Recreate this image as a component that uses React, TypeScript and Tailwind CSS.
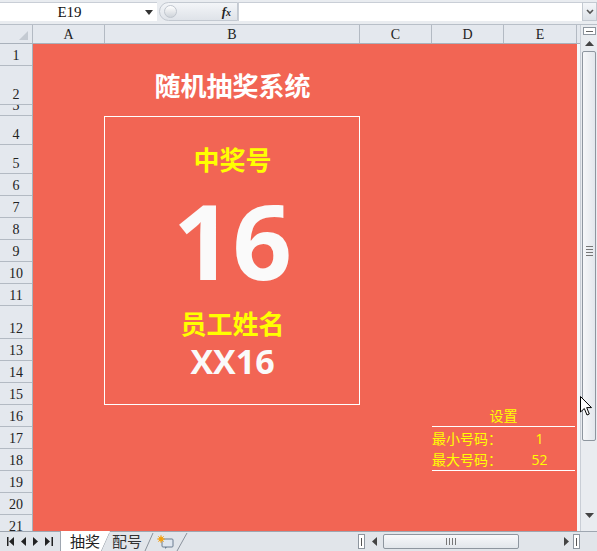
import React from "react";

const rowLabels = Array.from({ length: 21 }, (_, i) => String(i + 1));

const cjk = "font-['Open_Sans','Noto_Sans_CJK_SC',sans-serif]";
const mono = "font-['Liberation_Serif','Noto_Sans_CJK_SC',serif]";

function FormulaBar() {
  return (
    <div className="h-[25px] shrink-0 bg-[#e9ecf0] border-b border-[#b8bfc8] flex items-stretch pt-[2px] pb-[3px]">
      {/* Name box */}
      <div className="w-[157px] bg-white border-t border-[#c9ced6] flex items-center relative">
        <span className={`${mono} text-[15px] text-[#111] w-full text-center pr-[18px]`}>E19</span>
        <svg className="absolute right-[4px] top-[7px]" width="8" height="5" viewBox="0 0 8 5">
          <path d="M0 0 L8 0 L4 5 Z" fill="#333" />
        </svg>
      </div>
      {/* fx pill */}
      <div className="w-[79px] ml-[2px] rounded-l-full bg-gradient-to-b from-[#f3f5f8] to-[#dfe3e9] border border-[#c3c9d1] flex items-center justify-between px-[4px]">
        <span className="w-[13px] h-[13px] rounded-full bg-gradient-to-b from-white to-[#cfd4da] border border-[#c0c6ce]" />
        <span className="font-['Liberation_Serif',serif] italic font-bold text-[13px] text-[#222] pr-[2px]">
          f<span className="text-[10px]">x</span>
        </span>
      </div>
      {/* Input */}
      <div className="flex-1 bg-white border-t border-l border-[#c9ced6]" />
      {/* Expand button */}
      <div className="w-[15px] bg-gradient-to-b from-[#f4f6f9] to-[#dde2e8] border border-[#c3c9d1] flex items-center justify-center">
        <svg width="8" height="6" viewBox="0 0 8 6">
          <path d="M1 1 L4 4 L7 1" stroke="#555" strokeWidth="1.6" fill="none" />
        </svg>
      </div>
    </div>
  );
}

function ColumnHeaders() {
  const cols: [string, string][] = [
    ["A", "w-[72px]"],
    ["B", "w-[255px]"],
    ["C", "w-[72px]"],
    ["D", "w-[72px]"],
    ["E", "w-[73px]"],
  ];
  return (
    <div className="h-[19px] shrink-0 flex bg-[#e4e8ee] border-b border-[#a9b1bb]">
      <div className="w-[33px] border-r border-[#b3bac3] relative">
        <svg className="absolute right-[4px] bottom-[3px]" width="9" height="9" viewBox="0 0 9 9">
          <path d="M9 0 L9 9 L0 9 Z" fill="#c4cad2" />
        </svg>
      </div>
      {cols.map(([label, w]) => (
        <div
          key={label}
          className={`${w} border-r border-[#b3bac3] flex items-center justify-center ${mono} text-[14px] text-[#222]`}
        >
          {label}
        </div>
      ))}
      <div className="flex-1" />
    </div>
  );
}

function RowHeaders() {
  return (
    <div className="w-[33px] shrink-0 grid grid-rows-[22px_39px_11px_29px_29px_repeat(6,22px)_33px_repeat(9,22px)] bg-[#e4e8ee] border-r border-[#a9b1bb]">
      {rowLabels.map((n) => (
        <div
          key={n}
          className={`border-b border-[#b3bac3] flex items-end justify-center ${mono} text-[14px] leading-[14px] text-[#222] pb-[2px] overflow-hidden`}
        >
          {n}
        </div>
      ))}
    </div>
  );
}

function Cells() {
  return (
    <div className="w-[544px] shrink-0 bg-[#f26554] grid grid-cols-[72px_255px_72px_72px_73px] grid-rows-[22px_39px_11px_29px_29px_repeat(6,22px)_33px_repeat(9,22px)]">
      {/* title */}
      <div className={`col-start-2 row-start-2 flex items-center justify-center ${cjk} font-bold text-[26px] text-white pt-[2px]`}>
        随机抽奖系统
      </div>

      {/* result box */}
      <div className="col-start-2 row-start-4 row-end-16 ml-[-1px] border border-white" />

      <div className={`col-start-2 row-start-5 flex items-center justify-center ${cjk} font-bold text-[26px] leading-none text-[#ffff00]`}>
        中奖号
      </div>
      <div className={`col-start-2 row-start-6 row-end-12 flex items-center justify-center ${cjk} font-bold text-[104px] leading-none text-[#fafafa]`}>
        16
      </div>
      <div className={`col-start-2 row-start-12 flex items-center justify-center ${cjk} font-bold text-[26px] leading-none text-[#ffff00] pt-[2px]`}>
        员工姓名
      </div>
      <div className={`col-start-2 row-start-13 row-end-15 flex items-center justify-center ${cjk} font-bold text-[34px] leading-none text-[#fafafa]`}>
        XX16
      </div>

      {/* settings */}
      <div className={`col-start-4 col-span-2 row-start-16 border-b border-white flex items-center justify-center ${cjk} text-[14px] text-[#ffff00] mr-[2px]`}>
        设置
      </div>
      <div className={`col-start-4 row-start-17 flex items-center ${cjk} text-[14px] text-[#ffff00]`}>
        最小号码：
      </div>
      <div className={`col-start-5 row-start-17 flex items-center justify-center ${cjk} text-[14px] text-[#ffff00] pr-[2px]`}>
        1
      </div>
      <div className={`col-start-4 row-start-18 border-b border-white flex items-center ${cjk} text-[14px] text-[#ffff00]`}>
        最大号码：
      </div>
      <div className={`col-start-5 row-start-18 border-b border-white flex items-center justify-center ${cjk} text-[14px] text-[#ffff00] mr-[2px]`}>
        52
      </div>
    </div>
  );
}

function VerticalScroll() {
  return (
    <div className="w-[17px] shrink-0 bg-[#e9ecf0] border-l border-[#c9ced6] flex flex-col items-center pt-[2px] pb-[8px]">
      <div className="w-[13px] h-[8px] border border-[#8e969f] bg-white flex items-center justify-center">
        <div className="w-[7px] h-px bg-[#666]" />
      </div>
      <div className="h-[16px] flex items-center justify-center">
        <svg width="9" height="5" viewBox="0 0 9 5">
          <path d="M0 5 L4.5 0 L9 5 Z" fill="#444" />
        </svg>
      </div>
      <div className="w-[14px] h-[390px] rounded-[2px] border border-[#8e969f] bg-gradient-to-r from-[#f6f7f9] to-[#e3e7ec] flex items-center justify-center">
        <div className="flex flex-col gap-[2px] mt-[10px]">
          <div className="w-[7px] h-px bg-[#777]" />
          <div className="w-[7px] h-px bg-[#777]" />
          <div className="w-[7px] h-px bg-[#777]" />
          <div className="w-[7px] h-px bg-[#777]" />
        </div>
      </div>
      <div className="flex-1" />
      <div className="h-[16px] flex items-center justify-center">
        <svg width="9" height="5" viewBox="0 0 9 5">
          <path d="M0 0 L9 0 L4.5 5 Z" fill="#444" />
        </svg>
      </div>
    </div>
  );
}

function NavArrows() {
  return (
    <div className="w-[60px] shrink-0 flex items-center justify-around px-[4px]">
      <svg width="8" height="9" viewBox="0 0 8 9">
        <rect x="0" y="0" width="1.5" height="9" fill="#222" />
        <path d="M7 0 L2 4.5 L7 9 Z" fill="#222" />
      </svg>
      <svg width="6" height="9" viewBox="0 0 6 9">
        <path d="M5 0 L0 4.5 L5 9 Z" fill="#222" />
      </svg>
      <svg width="6" height="9" viewBox="0 0 6 9">
        <path d="M0 0 L5 4.5 L0 9 Z" fill="#222" />
      </svg>
      <svg width="8" height="9" viewBox="0 0 8 9">
        <path d="M0 0 L5 4.5 L0 9 Z" fill="#222" />
        <rect x="6.5" y="0" width="1.5" height="9" fill="#222" />
      </svg>
    </div>
  );
}

function TabBar() {
  return (
    <div className="h-[20px] shrink-0 bg-[#e1e5ea] border-t border-[#9ea6b0] flex items-stretch">
      <NavArrows />
      <div className="flex items-stretch">
        <div className={`w-[50px] -mt-px bg-white border-l border-[#9ea6b0] [clip-path:polygon(0_0,100%_0,82%_100%,0_100%)] flex items-center pl-[9px] ${cjk} text-[15px] text-[#222] leading-none`}>
          抽奖
        </div>
        <svg width="10" height="20" viewBox="0 0 10 20" className="-ml-[10px]">
          <path d="M1 19 L9 1" stroke="#8a929c" strokeWidth="1" />
        </svg>
        <div className={`w-[34px] flex items-center pl-[2px] ${cjk} text-[15px] text-[#333] leading-none`}>
          配号
        </div>
        <svg width="10" height="20" viewBox="0 0 10 20">
          <path d="M1 19 L9 1" stroke="#8a929c" strokeWidth="1" />
        </svg>
        <div className="w-[22px] flex items-center justify-center">
          <svg width="17" height="14" viewBox="0 0 17 14">
            <rect x="5" y="4" width="11" height="8" rx="1" fill="#dfe6ef" stroke="#6b7c90" strokeWidth="1" />
            <path d="M8 12 L8 14 L10 12" fill="#6b7c90" />
            <circle cx="4" cy="4" r="2.5" fill="#f6b21c" />
            <path d="M4 0 L4 8 M0 4 L8 4 M1.2 1.2 L6.8 6.8 M6.8 1.2 L1.2 6.8" stroke="#f39a12" strokeWidth="0.8" />
          </svg>
        </div>
        <svg width="12" height="20" viewBox="0 0 12 20">
          <path d="M1 19 L11 1" stroke="#8a929c" strokeWidth="1" />
        </svg>
      </div>
      <div className="flex-1" />
      {/* horizontal scroll */}
      <div className="w-[7px] my-[2px] border border-[#8e969f] bg-white flex items-center justify-center">
        <div className="w-px h-[8px] bg-[#555]" />
      </div>
      <div className="w-[18px] flex items-center justify-center">
        <svg width="5" height="9" viewBox="0 0 5 9">
          <path d="M5 0 L0 4.5 L5 9 Z" fill="#444" />
        </svg>
      </div>
      <div className="w-[136px] my-[2px] rounded-[2px] border border-[#8e969f] bg-gradient-to-b from-[#f8f9fb] to-[#e2e6eb] flex items-center justify-center gap-[2px]">
        <div className="w-px h-[7px] bg-[#777]" />
        <div className="w-px h-[7px] bg-[#777]" />
        <div className="w-px h-[7px] bg-[#777]" />
        <div className="w-px h-[7px] bg-[#777]" />
      </div>
      <div className="w-[54px] flex items-center justify-end pr-[4px]">
        <svg width="5" height="9" viewBox="0 0 5 9">
          <path d="M0 0 L5 4.5 L0 9 Z" fill="#444" />
        </svg>
      </div>
      <div className="w-[7px] my-[2px] border border-[#8e969f] bg-white flex items-center justify-center">
        <div className="w-px h-[8px] bg-[#555]" />
      </div>
      <div className="w-[17px] bg-[#e1e5ea]" />
    </div>
  );
}

export default function App() {
  return (
    <div className="w-[597px] h-[551px] overflow-hidden bg-[#e9ecf0] flex flex-col relative">
      <FormulaBar />
      <div className="h-[506px] flex">
        <div className="w-[580px] flex flex-col overflow-hidden bg-white">
          <ColumnHeaders />
          <div className="flex-1 flex overflow-hidden">
            <RowHeaders />
            <Cells />
            <div className="flex-1 bg-[#f6f7f9]" />
          </div>
        </div>
        <VerticalScroll />
      </div>
      <TabBar />

      {/* mouse pointer */}
      <svg className="absolute left-[580px] top-[396px]" width="13" height="21" viewBox="0 0 13 21">
        <path d="M0.5 0.5 L0.5 16 L4.3 12.5 L7 19 L9.3 18 L6.7 11.6 L11.5 11.6 Z" fill="white" stroke="black" strokeWidth="1" strokeLinejoin="round" />
      </svg>
    </div>
  );
}
